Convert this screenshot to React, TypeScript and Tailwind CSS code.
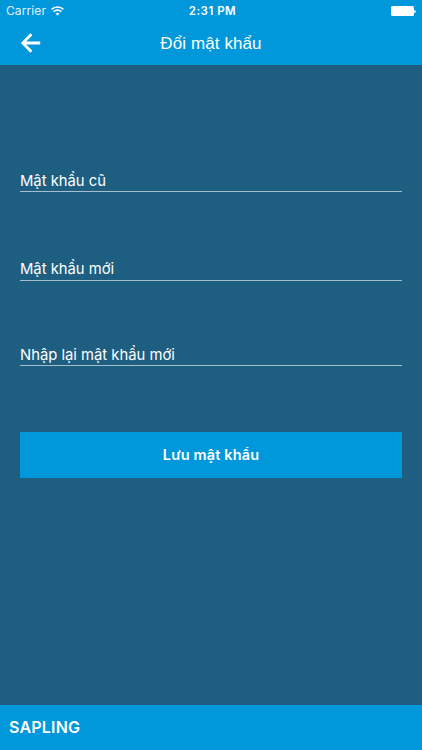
import React from "react";

function Field({ label, className }: { label: string; className: string }) {
  return (
    <div className={`mx-5 flex items-end border-b border-[#a5bfcc] text-[14.8px] text-white ${className}`}>
      <span>{label}</span>
    </div>
  );
}

export default function App() {
  return (
    <div className="flex h-[750px] w-[422px] flex-col overflow-hidden bg-[#1e5e80] font-['Inter',sans-serif] text-white">
      <header className="h-[65px] bg-[#0097db]">
        <div className="grid h-[22px] grid-cols-3 items-center px-[6px] text-[11.5px] leading-none">
          <div className="flex items-center gap-1 text-[#e3f4fc]">
            <span className="text-[12px] tracking-[0.1px]">Carrier</span>
            <svg className="ml-px" width="13" height="10" viewBox="0 0 13 10" fill="none" stroke="white" strokeWidth="1.6">
              <path d="M0.6 3.4a8.4 8.4 0 0 1 11.8 0M2.6 5.7a5.5 5.5 0 0 1 7.8 0" />
              <path d="M6.5 9.6 4.5 7.6a2.9 2.9 0 0 1 4 0z" fill="white" stroke="none" />
            </svg>
          </div>
          <span className="pl-[3px] pt-[2px] text-center font-semibold tracking-[0.5px]">2:31 PM</span>
          <div className="flex items-center justify-end">
            <span className="h-[10px] w-[23px] rounded-[1.5px] bg-white" />
            <span className="h-[3px] w-[2px] rounded-r bg-[#c5e8f8]" />
          </div>
        </div>
        <div className="grid h-[43px] grid-cols-[60px_1fr_60px] items-center">
          <svg className="-mt-[2px] ml-5" width="22" height="20" viewBox="0 0 22 20" fill="none" stroke="white" strokeWidth="2.8">
            <path d="M11.4 1.2 2.8 10l8.6 8.8M2.8 10H20.2" />
          </svg>
          <h1 className="text-center font-['Liberation_Sans',sans-serif] text-[17px] tracking-[0.1px]">Đổi mật khẩu</h1>
        </div>
      </header>
      <main className="flex flex-1 flex-col">
        <Field label="Mật khẩu cũ" className="h-[127px] leading-[20px]" />
        <Field label="Mật khẩu mới" className="h-[89px] leading-[22px]" />
        <Field label="Nhập lại mật khẩu mới" className="h-[85px] leading-[20px]" />
        <button className="mx-5 mt-[66px] h-[46px] bg-[#0097db] text-[14.5px] font-semibold tracking-[0.15px]">Lưu mật khẩu</button>
      </main>
      <footer className="flex h-[45px] items-center bg-[#0097db] px-[9px] pb-px text-[16px] font-semibold tracking-[0.2px]">SAPLING</footer>
    </div>
  );
}
